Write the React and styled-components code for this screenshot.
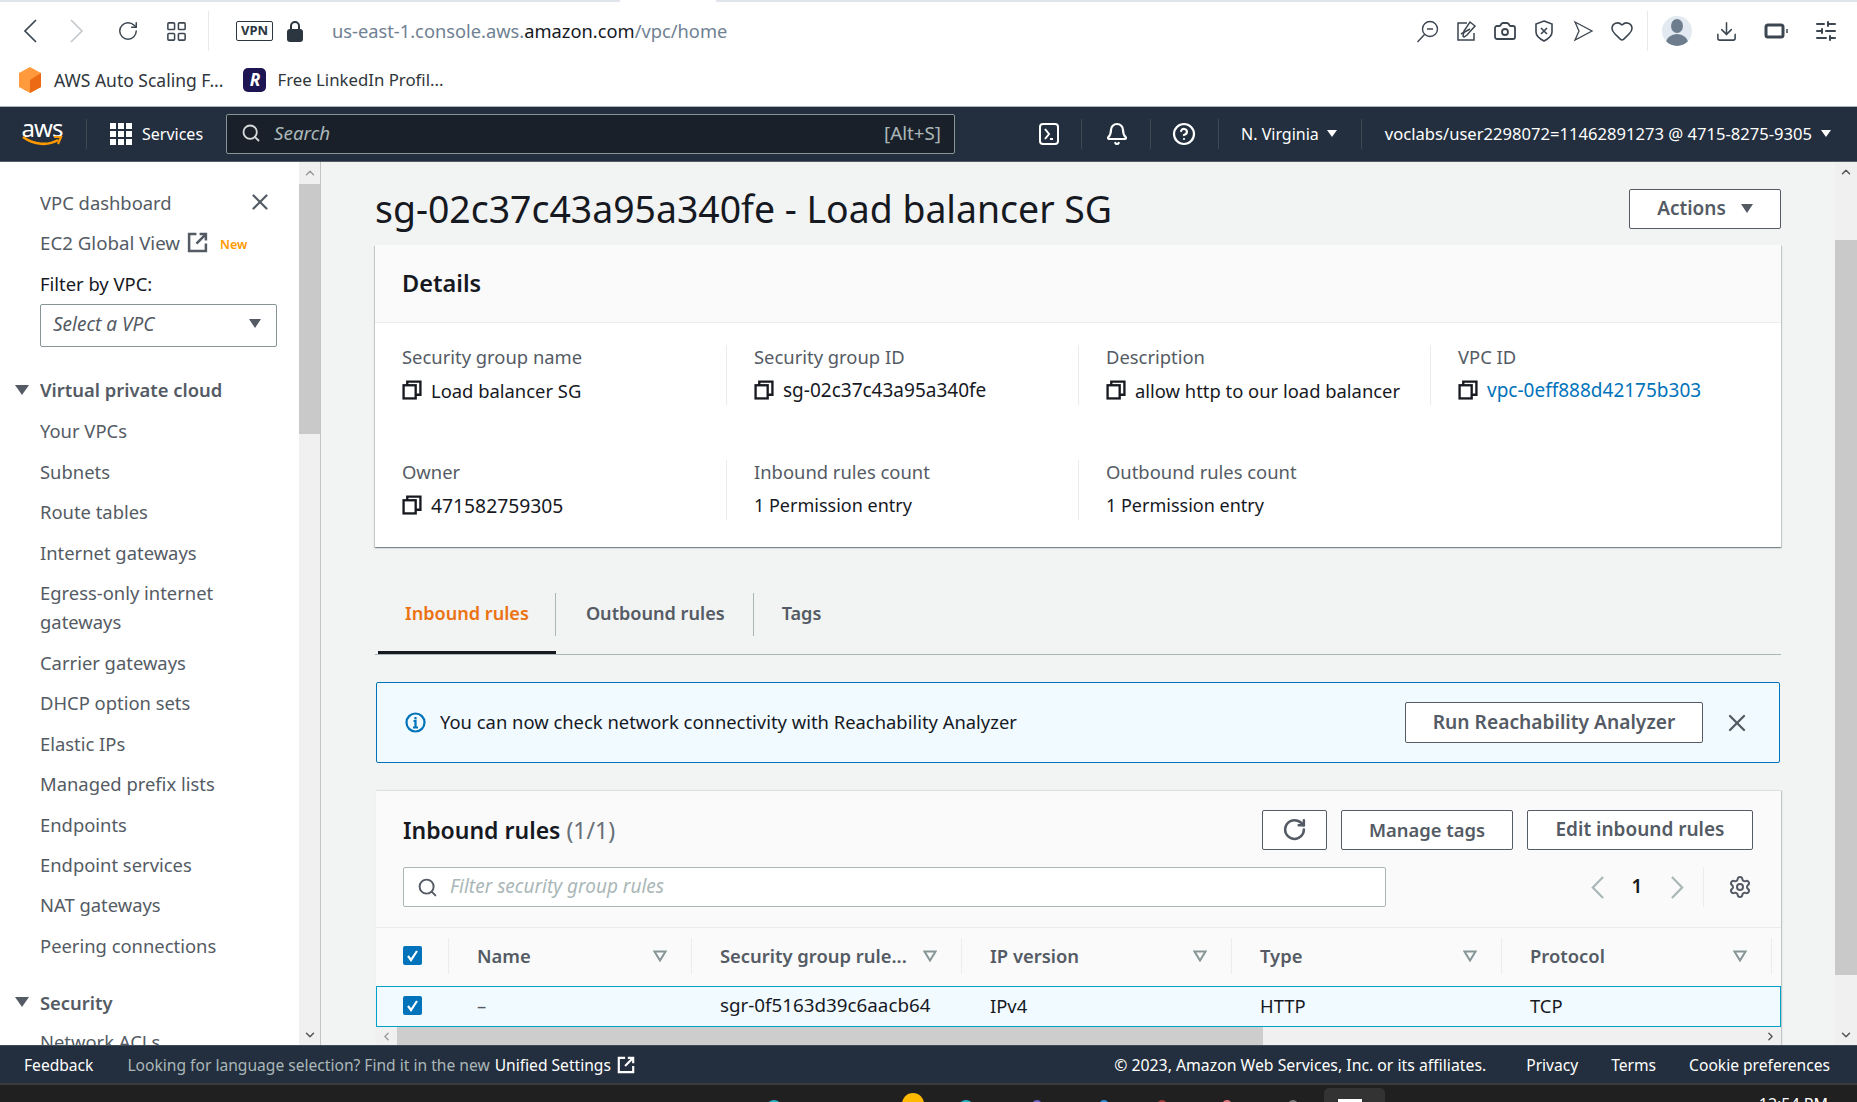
import React from "react";
import styled, { createGlobalStyle } from "styled-components";
import {
  Bell,
  Camera,
  ChevronDown,
  ChevronLeft,
  ChevronRight,
  ChevronUp,
  CircleHelp,
  Download,
  Heart,
  LayoutGrid,
  RotateCw,
  Search,
  Settings,
  SlidersHorizontal,
  X,
} from "lucide-react";

const GlobalStyle = createGlobalStyle`
  html, body { margin: 0; padding: 0; height: 100%; overflow: hidden; }
  body { font-family: "Noto Sans", "Open Sans", sans-serif; background: #fff; color: #16191f; }
  * { box-sizing: border-box; }
`;

const Page = styled.div`
  width: 1857px;
  height: 1102px;
  display: flex;
  flex-direction: column;
  overflow: hidden;
`;

/* browser chrome */
const TabStrip = styled.div`
  height: 2px;
  flex: none;
  background: linear-gradient(to right, #dfe5ea 620px, #fff 620px, #fff 716px, #dfe5ea 716px);
`;
const BrowserBar = styled.div`
  height: 58px;
  flex: none;
  display: flex;
  align-items: center;
  padding: 0 0 0 18px;
  color: #3c4650;
`;
const BarIcon = styled.span`
  display: inline-flex;
  align-items: center;
  justify-content: center;
  flex: none;
  width: ${(p) => p.$w || 24}px;
  margin-left: ${(p) => p.$ml || 0}px;
  margin-right: ${(p) => p.$mr || 0}px;
  color: ${(p) => p.$color || "inherit"};
`;
const BarSep = styled.span`
  width: 1px;
  height: 40px;
  flex: none;
  background: #e7eaed;
  margin-left: ${(p) => p.$ml}px;
`;
const VpnTag = styled.span`
  flex: none;
  width: 37px;
  height: 20px;
  margin-left: 27px;
  border: 1.5px solid #2c3640;
  border-radius: 2px;
  font-size: 13px;
  font-weight: 700;
  line-height: 17px;
  text-align: center;
  color: #2c3640;
`;
const Url = styled.div`
  margin-left: 25px;
  padding-bottom: 2px;
  font-size: 18.3px;
  color: #6f8193;
  & b { font-weight: 400; color: #16191f; }
`;
const Spacer = styled.div`
  flex: 1;
`;
const Avatar = styled.span`
  position: relative;
  flex: none;
  width: 30px;
  height: 30px;
  margin-left: 14px;
  border-radius: 50%;
  background: #e2e9f0;
  overflow: hidden;
  &::before {
    content: "";
    position: absolute;
    left: 9px;
    top: 3px;
    width: 12px;
    height: 14px;
    border-radius: 50%;
    background: #6d7d8e;
  }
  &::after {
    content: "";
    position: absolute;
    left: 4px;
    top: 18px;
    width: 22px;
    height: 18px;
    border-radius: 50%;
    background: #6d7d8e;
  }
`;
const Bookmarks = styled.div`
  height: 46px;
  flex: none;
  display: flex;
  align-items: center;
  padding: 0 0 7px 18px;
  font-size: 17.5px;
  color: #30363c;
`;
const BookmarkText = styled.span`
  margin-left: ${(p) => p.$ml}px;
  font-size: ${(p) => p.$fs || 17.5}px;
  white-space: nowrap;
`;
const RBadge = styled.span`
  flex: none;
  width: 23px;
  height: 24px;
  margin-left: 20px;
  border-radius: 5px;
  background: #1d1652;
  color: #fff;
  font-size: 17px;
  font-weight: 700;
  font-style: italic;
  line-height: 24px;
  text-align: center;
`;

/* aws console nav */
const Nav = styled.div`
  height: 56px;
  flex: none;
  display: flex;
  align-items: center;
  padding-bottom: 1px;
  background: #232f3e;
  border-top: 1px solid #aab7b8;
  border-bottom: 1px solid #545b64;
  color: #fff;
  font-size: 16px;
`;
const AwsLogo = styled.div`
  width: 42px;
  flex: none;
  margin-left: 21px;
  display: flex;
  flex-direction: column;
  align-items: center;
  font-size: 24px;
  line-height: 20px;
  letter-spacing: -1px;
  height: 32px;
  & svg { margin-top: -3px; }
`;
const NavSep = styled.span`
  width: 1px;
  height: 30px;
  flex: none;
  background: #414750;
  margin-left: ${(p) => p.$ml}px;
`;
const NavText = styled.span`
  margin-left: ${(p) => p.$ml || 0}px;
  font-size: ${(p) => p.$fs || 16}px;
  white-space: nowrap;
`;
const SearchBox = styled.div`
  width: 729px;
  height: 40px;
  flex: none;
  margin-left: 23px;
  display: flex;
  align-items: center;
  padding: 0 13px 1px 14px;
  background: #1a202a;
  border: 1px solid #879596;
  border-radius: 2px;
  color: #aab7b8;
  font-size: 18.8px;
`;
const SearchText = styled.span`
  margin-left: 13px;
  flex: 1;
  font-style: italic;
`;
const Caret = styled.span`
  display: inline-block;
  flex: none;
  width: 0;
  height: 0;
  margin-left: ${(p) => p.$ml || 0}px;
  border-left: ${(p) => p.$size || 5}px solid transparent;
  border-right: ${(p) => p.$size || 5}px solid transparent;
  border-top: ${(p) => (p.$size || 5) * 1.5}px solid ${(p) => p.$color || "currentColor"};
`;

/* body */
const Workspace = styled.div`
  height: 883px;
  flex: none;
  display: flex;
`;
const Sidebar = styled.aside`
  width: 299px;
  flex: none;
  padding: 20px 0 0 0;
  overflow: hidden;
  background: #fff;
  color: #545b64;
  font-size: 18.4px;
`;
const SideRow = styled.div`
  height: ${(p) => p.$h || 40.4}px;
  display: flex;
  align-items: center;
  padding-left: 40px;
  white-space: nowrap;
  font-size: ${(p) => p.$fs || 18.4}px;
  color: ${(p) => p.$color || "inherit"};
`;
const SideClose = styled.span`
  margin-left: auto;
  margin-right: 26px;
  display: inline-flex;
`;
const ExtWrap = styled.span`
  margin-left: ${(p) => p.$ml}px;
  display: inline-flex;
`;
const NewTag = styled.span`
  margin: 4px 0 0 12px;
  font-size: 12.5px;
  font-weight: 600;
  color: #ff9900;
`;
const Select = styled.div`
  width: 237px;
  height: 43px;
  margin: 0 0 25px 40px;
  display: flex;
  align-items: center;
  justify-content: space-between;
  padding: 0 15px 3px 12px;
  border: 1px solid #879596;
  border-radius: 2px;
  font-size: 19px;
  font-style: italic;
`;
const SideHeading = styled.div`
  height: ${(p) => p.$h || 40}px;
  margin-top: ${(p) => p.$mt || 0}px;
  margin-bottom: ${(p) => p.$mb || 0}px;
  display: flex;
  align-items: center;
  padding-left: 15px;
  font-weight: 600;
  & > span:last-child { margin-left: 11px; }
`;
const Wrapped = styled.div`
  height: 70px;
  padding: 6px 0 0 40px;
  line-height: 29px;
`;
const Scrollbar = styled.div`
  width: 22px;
  flex: none;
  display: flex;
  flex-direction: column;
  background: #f0f0f0;
  color: #9a9a9a;
  border-right: ${(p) => (p.$edge ? "1px solid #c4c4c4" : "none")};
`;
const ScrollBtn = styled.div`
  height: ${(p) => p.$h}px;
  flex: none;
  display: flex;
  align-items: ${(p) => p.$align || "center"};
  justify-content: center;
  padding: 3px 0;
`;
const ScrollThumb = styled.div`
  height: ${(p) => p.$h}px;
  flex: none;
  background: #c9c9c9;
`;
const ScrollFill = styled.div`
  flex: 1;
`;
const Content = styled.main`
  flex: 1;
  min-width: 0;
  height: 100%;
  padding: 0 0 0 54px;
  display: flex;
  flex-direction: column;
  overflow: hidden;
  background: #f2f3f3;
`;
const ContentInner = styled.div`
  width: 1406px;
  display: flex;
  flex-direction: column;
  height: 100%;
`;
const TitleRow = styled.div`
  height: 83px;
  flex: none;
  padding-top: 27px;
  display: flex;
  justify-content: space-between;
  align-items: flex-start;
`;
const Title = styled.h1`
  margin: 0;
  font-size: 37.4px;
  line-height: 40px;
  font-weight: 400;
  white-space: nowrap;
`;
const Button = styled.button`
  height: ${(p) => p.$h || 40}px;
  width: ${(p) => p.$w}px;
  margin-left: ${(p) => p.$ml || 0}px;
  flex: none;
  display: inline-flex;
  align-items: center;
  justify-content: center;
  gap: ${(p) => p.$gap || 0}px;
  padding: 0 0 2px;
  background: #fff;
  border: 1px solid #545b64;
  border-radius: 2px;
  color: #545b64;
  font-family: inherit;
  font-size: ${(p) => p.$fs || 19}px;
  font-weight: 600;
`;
const DetailsCard = styled.section`
  flex: none;
  height: 302px;
  background: #fff;
  box-shadow: 0 1px 1px 0 rgba(0, 28, 36, 0.3), 1px 1px 1px 0 rgba(0, 28, 36, 0.15), -1px 1px 1px 0 rgba(0, 28, 36, 0.15);
`;
const CardHead = styled.div`
  height: 78px;
  display: flex;
  align-items: center;
  padding: 0 0 2px 27px;
  background: #fafafa;
  border-bottom: 1px solid #eaeded;
  font-size: 23.5px;
  font-weight: 600;
`;
const DetailGrid = styled.div`
  display: grid;
  grid-template-columns: repeat(4, 352px);
  grid-auto-rows: 60px;
  row-gap: 55px;
  padding-top: 22px;
`;
const Detail = styled.div`
  padding-left: 27px;
  border-right: ${(p) => (p.$last ? "none" : "1px solid #eaeded")};
  font-size: 18.4px;
  white-space: nowrap;
`;
const DetailLabel = styled.div`
  height: 26px;
  line-height: 24px;
  color: #545b64;
`;
const DetailValue = styled.div`
  margin-top: 5px;
  height: 28px;
  display: flex;
  align-items: center;
  gap: 9px;
  font-size: ${(p) => p.$fs || 18.4}px;
  color: #16191f;
  & a { color: #0073bb; text-decoration: none; }
`;
const TabBar = styled.div`
  flex: none;
  height: 65px;
  margin-top: 43px;
  padding-left: 3px;
  display: flex;
  border-bottom: 1px solid #aab7b8;
`;
const Tab = styled.div`
  height: 64px;
  border-bottom: ${(p) => (p.$active ? "3px solid #16191f" : "none")};
`;
const TabLabel = styled.div`
  height: 43px;
  margin-top: 3px;
  display: flex;
  align-items: center;
  padding: 0 ${(p) => p.$pr}px 3px ${(p) => p.$pl}px;
  border-right: ${(p) => (p.$last ? "none" : "1px solid #aab7b8")};
  font-size: 18.1px;
  font-weight: 600;
  white-space: nowrap;
  color: ${(p) => (p.$active ? "#ec7211" : "#545b64")};
`;
const Alert = styled.div`
  flex: none;
  height: 81px;
  margin: 27px 1px 0 1px;
  display: flex;
  align-items: center;
  padding: 0 28px 0 28px;
  background: #f1faff;
  border: 1px solid #0073bb;
  border-radius: 2px;
  font-size: 18.4px;
`;
const AlertText = styled.span`
  margin-left: 14px;
  padding-bottom: 3px;
  flex: 1;
`;
const AlertClose = styled.span`
  display: inline-flex;
  margin-left: 20px;
  color: #545b64;
`;
const TableCard = styled.section`
  flex: 1;
  min-height: 0;
  margin: 28px 0 0 1px;
  display: flex;
  flex-direction: column;
  background: #fafafa;
  box-shadow: 1px 0 1px 0 rgba(0, 28, 36, 0.2), 0 -1px 1px 0 rgba(0, 28, 36, 0.05);
`;
const TableTools = styled.div`
  height: 137px;
  flex: none;
  padding: 19px 28px 0 27px;
  border-bottom: 1px solid #eaeded;
`;
const ToolRow = styled.div`
  display: flex;
  align-items: center;
  height: ${(p) => p.$h}px;
  margin-top: ${(p) => p.$mt || 0}px;
`;
const TableTitle = styled.h2`
  margin: 0;
  flex: 1;
  font-size: 23px;
  font-weight: 600;
  & span { font-weight: 400; color: #687078; }
`;
const FilterBox = styled.div`
  width: 983px;
  height: 40px;
  flex: none;
  display: flex;
  align-items: center;
  padding-left: 13px;
  background: #fff;
  border: 1px solid #aab7b8;
  border-radius: 2px;
  color: #545b64;
`;
const FilterText = styled.span`
  margin-left: 12px;
  padding-bottom: 2px;
  font-size: 19px;
  font-style: italic;
  color: #aab7b8;
`;
const Pager = styled.div`
  margin-left: auto;
  width: 170px;
  height: 40px;
  display: flex;
  align-items: center;
  color: #aab7b8;
`;
const PagerArrow = styled.span`
  width: 28px;
  display: inline-flex;
  justify-content: center;
`;
const PagerNumber = styled.b`
  width: 52px;
  padding-bottom: 2px;
  text-align: center;
  font-size: 19px;
  font-weight: 600;
  color: #16191f;
`;
const PagerSep = styled.span`
  width: 1px;
  height: 40px;
  margin-left: 12px;
  background: #eaeded;
`;
const GearWrap = styled.span`
  display: inline-flex;
  margin-left: 24px;
  color: #545b64;
`;
const GridRow = styled.div`
  flex: none;
  height: ${(p) => p.$h}px;
  display: grid;
  grid-template-columns: 73px 243px 270px 270px 270px 270px 10px;
  align-items: center;
  font-size: 18.4px;
  ${(p) => (p.$selected ? "background: #f1faff; border: 1.5px solid #00a1c9;" : "")}
`;
const HeadCell = styled.div`
  height: 36px;
  display: flex;
  align-items: center;
  justify-content: space-between;
  padding: 0 24px 0 ${(p) => p.$pl || 28}px;
  border-right: 1px solid #eaeded;
  font-weight: 600;
  color: #545b64;
  white-space: nowrap;
  margin-bottom: 3px;
`;
const BodyCell = styled.div`
  padding: 0 0 3px ${(p) => p.$pl || 27}px;
  display: flex;
  white-space: nowrap;
  font-size: ${(p) => p.$fs || 18.4}px;
  color: ${(p) => p.$color || "#16191f"};
`;
const Check = styled.span`
  display: inline-flex;
  align-items: center;
  justify-content: center;
  width: 19px;
  height: 19px;
  border-radius: 2px;
  background: #0073bb;
`;
const HScroll = styled.div`
  height: 18px;
  flex: none;
  display: flex;
  background: #f0f0f0;
  color: #9a9a9a;
`;
const HScrollBtn = styled.div`
  width: 21px;
  display: flex;
  align-items: center;
  justify-content: center;
`;
const HScrollThumb = styled.div`
  width: 866px;
  background: #cdcdcd;
`;

/* footer + taskbar */
const Footer = styled.footer`
  height: 40px;
  flex: none;
  display: flex;
  align-items: center;
  padding: 0 27px 0 24px;
  background: #232f3e;
  border-top: 1px solid #3f4a57;
  border-bottom: 2px solid #3c3c3c;
  color: #fff;
  font-size: 15.6px;
  white-space: nowrap;
`;
const FootMuted = styled.span`
  margin-left: 34px;
  color: #aab7b8;
`;
const FootLink = styled.span`
  margin-left: ${(p) => p.$ml || 0}px;
  font-size: ${(p) => p.$fs || 15.6}px;
`;
const Taskbar = styled.div`
  flex: 1;
  min-height: 0;
  display: flex;
  overflow: hidden;
  background: #202020;
`;
const Tray = styled.span`
  flex: none;
  margin-left: ${(p) => p.$ml}px;
  margin-top: ${(p) => p.$mt}px;
  width: ${(p) => p.$w}px;
  height: ${(p) => p.$h}px;
  border-radius: ${(p) => p.$r || "50%"};
  background: ${(p) => p.$bg};
`;
const TrayBox = styled.span`
  flex: none;
  margin-left: ${(p) => p.$ml}px;
  margin-top: 3px;
  width: 61px;
  height: 30px;
  padding: 11px 0 0 14px;
  border-radius: 5px;
  background: #333;
  &::after {
    content: "";
    display: block;
    width: 24px;
    height: 10px;
    background: #fff;
  }
`;
const Clock = styled.span`
  margin-left: auto;
  margin-right: 29px;
  margin-top: 10px;
  color: #fff;
  font-size: 16px;
  line-height: 18px;
`;

const CopyIcon = () => (
  <svg width="20" height="20" viewBox="0 0 19 19" fill="none" stroke="#16191f" strokeWidth="2.2">
    <path d="M5 5V1.5h12.5V14H13" />
    <rect x="1.5" y="5" width="11.5" height="12.5" />
  </svg>
);

const ExtIcon = ({ size = 21, color = "#545b64" }) => (
  <svg width={size} height={size} viewBox="0 0 20 20" fill="none" stroke={color} strokeWidth="2.4">
    <path d="M9 2H2v16h16v-7" />
    <path d="M12 2h6v6M18 2L9 11" />
  </svg>
);

const SortIcon = () => (
  <svg width="14" height="12" viewBox="0 0 14 12" fill="none" stroke="#879596" strokeWidth="2">
    <path d="M1.5 1.5h11L7 10.5z" />
  </svg>
);

const ThinChevron = ({ left, width = 14, height = 24, weight = 1.7 }) => (
  <svg width={width} height={height} viewBox="0 0 14 24" fill="none" stroke="currentColor" strokeWidth={weight} preserveAspectRatio="none">
    <path d={left ? "M13 1L2 12l11 11" : "M1 1l11 11L1 23"} />
  </svg>
);

const CheckBox = () => (
  <Check>
    <svg width="13" height="13" viewBox="0 0 13 13" fill="none" stroke="#fff" strokeWidth="2.2">
      <path d="M2 7l3 4 6-9" />
    </svg>
  </Check>
);

const sideItems = ["Your VPCs", "Subnets", "Route tables", "Internet gateways"];
const sideItems2 = [
  "Carrier gateways",
  "DHCP option sets",
  "Elastic IPs",
  "Managed prefix lists",
  "Endpoints",
  "Endpoint services",
  "NAT gateways",
  "Peering connections",
];

const details = [
  { label: "Security group name", value: "Load balancer SG", copy: true },
  { label: "Security group ID", value: "sg-02c37c43a95a340fe", copy: true, fs: 19 },
  { label: "Description", value: "allow http to our load balancer", copy: true },
  { label: "VPC ID", value: "vpc-0eff888d42175b303", copy: true, link: true, last: true, fs: 19 },
  { label: "Owner", value: "471582759305", copy: true, fs: 19.3 },
  { label: "Inbound rules count", value: "1 Permission entry", fs: 18 },
  { label: "Outbound rules count", value: "1 Permission entry", last: true, fs: 18 },
];

const columns = ["Name", "Security group rule...", "IP version", "Type", "Protocol"];

const trayBits = [
  { ml: 766, mt: 15, w: 16, h: 16, bg: "#2bb3c9" },
  { ml: 120, mt: 8, w: 22, h: 22, bg: "#ffb900" },
  { ml: 34, mt: 15, w: 16, h: 16, bg: "#2bb3c9" },
  { ml: 58, mt: 15, w: 10, h: 10, bg: "#6a5fc1" },
  { ml: 57, mt: 15, w: 10, h: 10, bg: "#2f8fd8" },
  { ml: 48, mt: 15, w: 10, h: 10, bg: "#a03a3a" },
  { ml: 55, mt: 15, w: 10, h: 10, bg: "#e0737a" },
  { ml: 56, mt: 15, w: 10, h: 10, bg: "#777" },
];

export default function App() {
  return (
    <Page>
      <GlobalStyle />
      <TabStrip />
      <BrowserBar>
        <BarIcon><ThinChevron left /></BarIcon>
        <BarIcon $ml={23} $color="#c4cace"><ThinChevron /></BarIcon>
        <BarIcon $ml={27}><RotateCw size={22} strokeWidth={1.6} /></BarIcon>
        <BarIcon $ml={24}><LayoutGrid size={23} strokeWidth={1.6} /></BarIcon>
        <BarSep $ml={20} />
        <VpnTag>VPN</VpnTag>
        <BarIcon $ml={10}>
          <svg width="16" height="21" viewBox="0 0 16 21" fill="none" stroke="#2c3640" strokeWidth="2">
            <path d="M4 9V5a4 4 0 0 1 8 0v4" />
            <rect x="1" y="9" width="14" height="11" rx="2" fill="#2c3640" />
          </svg>
        </BarIcon>
        <Url>us-east-1.console.aws.<b>amazon.com</b>/vpc/home</Url>
        <Spacer />
        <BarIcon>
          <svg width="23" height="23" viewBox="0 0 23 23" fill="none" stroke="currentColor" strokeWidth="1.4">
            <circle cx="14" cy="9" r="7.5" />
            <path d="M8.5 14.5L1.5 22M11 9h6" />
          </svg>
        </BarIcon>
        <BarIcon $ml={15}>
          <svg width="22" height="22" viewBox="0 0 22 22" fill="none" stroke="currentColor" strokeWidth="1.5">
            <path d="M12 3H3v17h16v-7" />
            <path d="M15 2l5 4-8 9-3 2-1-1 1-5z" />
            <path d="M6 14l9-5" />
          </svg>
        </BarIcon>
        <BarIcon $ml={15}><Camera size={24} strokeWidth={1.8} /></BarIcon>
        <BarIcon $ml={15}>
          <svg width="22" height="24" viewBox="0 0 22 24" fill="none" stroke="currentColor" strokeWidth="1.6">
            <path d="M11 2l8 3v8c0 4-4 7-8 9-4-2-8-5-8-9V5z" />
            <path d="M8 9l6 6M14 9l-6 6" />
          </svg>
        </BarIcon>
        <BarIcon $ml={15}>
          <svg width="22" height="22" viewBox="0 0 22 22" fill="none" stroke="currentColor" strokeWidth="1.3">
            <path d="M3 2l17 9-17 9 4-9z" />
          </svg>
        </BarIcon>
        <BarIcon $ml={15}><Heart size={24} strokeWidth={1.6} /></BarIcon>
        <BarSep $ml={13} />
        <Avatar />
        <BarIcon $ml={22}><Download size={23} strokeWidth={1.6} /></BarIcon>
        <BarIcon $ml={26}>
          <svg width="24" height="18" viewBox="0 0 24 18" fill="none" stroke="currentColor" strokeWidth="3">
            <rect x="2" y="3" width="17" height="12" rx="2" />
            <path d="M23 7v4" strokeWidth="1.5" />
          </svg>
        </BarIcon>
        <BarIcon $ml={26} $mr={19}>
          <SlidersHorizontal size={24} strokeWidth={2} />
        </BarIcon>
      </BrowserBar>
      <Bookmarks>
        <svg width="24" height="28" viewBox="0 0 24 28">
          <path d="M12 1l11 6v14l-11 6-11-6V7z" fill="#ff9a3c" />
          <path d="M12 14l11-7v14l-11 6z" fill="#ec6a14" />
        </svg>
        <BookmarkText $ml={12}>AWS Auto Scaling F...</BookmarkText>
        <RBadge>R</RBadge>
        <BookmarkText $ml={11} $fs={16.8}>Free LinkedIn Profil...</BookmarkText>
      </Bookmarks>
      <Nav>
        <AwsLogo>
          <span>aws</span>
          <svg width="42" height="13" viewBox="0 0 42 13" fill="none">
            <path d="M2 2c11 8 25 9 35 3" stroke="#ff9900" strokeWidth="2.6" />
            <path d="M33 2l7-0-3 7" stroke="#ff9900" strokeWidth="2.2" />
          </svg>
        </AwsLogo>
        <NavSep $ml={23} />
        <BarIcon $ml={23} $w={22}>
          <svg width="22" height="22" viewBox="0 0 22 22" fill="#fff">
            {[0, 8, 16].map((y) =>
              [0, 8, 16].map((x) => <rect key={`${x}-${y}`} x={x} y={y} width="6" height="6" />)
            )}
          </svg>
        </BarIcon>
        <NavText $ml={10}>Services</NavText>
        <SearchBox>
          <Search size={20} color="#d5dbdb" strokeWidth={2.2} />
          <SearchText>Search</SearchText>
          <span>[Alt+S]</span>
        </SearchBox>
        <BarIcon $ml={83} $w={22}>
          <svg width="22" height="24" viewBox="0 0 22 24" fill="none" stroke="#fff" strokeWidth="2">
            <rect x="2" y="2" width="18" height="20" rx="3" />
            <path d="M7 7l4 5-4 5M12 17h3" />
          </svg>
        </BarIcon>
        <NavSep $ml={21} />
        <BarIcon $ml={23} $w={24}><Bell size={24} strokeWidth={2.2} /></BarIcon>
        <NavSep $ml={21} />
        <BarIcon $ml={21} $w={24}><CircleHelp size={24} strokeWidth={2.2} /></BarIcon>
        <NavSep $ml={22} />
        <NavText $ml={22}>N. Virginia</NavText>
        <Caret $ml={8} />
        <NavSep $ml={24} />
        <NavText $ml={23} $fs={16.6}>voclabs/user2298072=11462891273 @ 4715-8275-9305</NavText>
        <Caret $ml={9} />
      </Nav>
      <Workspace>
        <Sidebar>
          <SideRow>
            VPC dashboard
            <SideClose><X size={26} strokeWidth={2} /></SideClose>
          </SideRow>
          <SideRow $fs={18.7}>
            EC2 Global View
            <ExtWrap $ml={7}><ExtIcon /></ExtWrap>
            <NewTag>New</NewTag>
          </SideRow>
          <SideRow $color="#16191f" $h={41}>Filter by VPC:</SideRow>
          <Select>
            Select a VPC
            <Caret $size={6.5} $color="#545b64" />
          </Select>
          <SideHeading $h={36} $mb={3}>
            <Caret $size={7} $color="#545b64" />
            <span>Virtual private cloud</span>
          </SideHeading>
          {sideItems.map((s) => <SideRow key={s}>{s}</SideRow>)}
          <Wrapped>Egress-only internet<br />gateways</Wrapped>
          {sideItems2.map((s) => <SideRow key={s}>{s}</SideRow>)}
          <SideHeading $mt={18} $h={38}>
            <Caret $size={7} $color="#545b64" />
            <span>Security</span>
          </SideHeading>
          <SideRow>Network ACLs</SideRow>
        </Sidebar>
        <Scrollbar $edge>
          <ScrollBtn $h={22}><ChevronUp size={14} strokeWidth={2.5} /></ScrollBtn>
          <ScrollThumb $h={250} />
          <ScrollFill />
          <ScrollBtn $h={20}><ChevronDown size={14} strokeWidth={2.5} color="#555" /></ScrollBtn>
        </Scrollbar>
        <Content>
          <ContentInner>
            <TitleRow>
              <Title>sg-02c37c43a95a340fe - Load balancer SG</Title>
              <Button $w={152} $gap={15}>
                Actions
                <Caret $size={6.5} />
              </Button>
            </TitleRow>
            <DetailsCard>
              <CardHead>Details</CardHead>
              <DetailGrid>
                {details.map((d) => (
                  <Detail key={d.label} $last={d.last}>
                    <DetailLabel>{d.label}</DetailLabel>
                    <DetailValue $fs={d.fs}>
                      {d.copy && <CopyIcon />}
                      {d.link ? <a href="#vpc">{d.value}</a> : <span>{d.value}</span>}
                    </DetailValue>
                  </Detail>
                ))}
              </DetailGrid>
            </DetailsCard>
            <TabBar>
              <Tab $active>
                <TabLabel $active $pl={27} $pr={26}>Inbound rules</TabLabel>
              </Tab>
              <Tab>
                <TabLabel $pl={30} $pr={28}>Outbound rules</TabLabel>
              </Tab>
              <Tab>
                <TabLabel $last $pl={28} $pr={28}>Tags</TabLabel>
              </Tab>
            </TabBar>
            <Alert>
              <svg width="21" height="21" viewBox="0 0 21 21" fill="none" stroke="#0073bb" strokeWidth="2.2">
                <circle cx="10.5" cy="10.5" r="9" />
                <path d="M8 15.5h5M10.5 15V9H8.5" />
                <path d="M10.5 5v2.4" />
              </svg>
              <AlertText>You can now check network connectivity with Reachability Analyzer</AlertText>
              <Button $w={298} $h={41} $fs={19.2}>Run Reachability Analyzer</Button>
              <AlertClose><X size={28} strokeWidth={2} /></AlertClose>
            </Alert>
            <TableCard>
              <TableTools>
                <ToolRow $h={40}>
                  <TableTitle>Inbound rules <span>(1/1)</span></TableTitle>
                  <Button $w={65}><RotateCw size={25} strokeWidth={2.4} /></Button>
                  <Button $w={172} $ml={14} $fs={18.4}>Manage tags</Button>
                  <Button $w={226} $ml={14}>Edit inbound rules</Button>
                </ToolRow>
                <ToolRow $h={40} $mt={17}>
                  <FilterBox>
                    <Search size={21} strokeWidth={2.2} />
                    <FilterText>Filter security group rules</FilterText>
                  </FilterBox>
                  <Pager>
                    <PagerArrow><ThinChevron left width={13} height={23} weight={2.4} /></PagerArrow>
                    <PagerNumber>1</PagerNumber>
                    <PagerArrow><ThinChevron width={13} height={23} weight={2.4} /></PagerArrow>
                    <PagerSep />
                    <GearWrap><Settings size={24} strokeWidth={2} /></GearWrap>
                  </Pager>
                </ToolRow>
              </TableTools>
              <GridRow $h={58}>
                <HeadCell $pl={27}><CheckBox /></HeadCell>
                {columns.map((c, i) => (
                  <HeadCell key={c} $pl={i === 0 ? 28 : 28}>
                    {c}
                    <SortIcon />
                  </HeadCell>
                ))}
              </GridRow>
              <GridRow $h={41} $selected>
                <BodyCell $pl={26}><CheckBox /></BodyCell>
                <BodyCell $color="#545b64">–</BodyCell>
                <BodyCell $fs={18.8}>sgr-0f5163d39c6aacb64</BodyCell>
                <BodyCell>IPv4</BodyCell>
                <BodyCell>HTTP</BodyCell>
                <BodyCell>TCP</BodyCell>
              </GridRow>
              <HScroll>
                <HScrollBtn><ChevronLeft size={13} strokeWidth={2.5} /></HScrollBtn>
                <HScrollThumb />
                <ScrollFill />
                <HScrollBtn><ChevronRight size={13} strokeWidth={2.5} color="#555" /></HScrollBtn>
              </HScroll>
            </TableCard>
          </ContentInner>
        </Content>
        <Scrollbar>
          <ScrollBtn $h={78} $align="flex-start"><ChevronUp size={14} strokeWidth={2.5} color="#555" /></ScrollBtn>
          <ScrollThumb $h={735} />
          <ScrollFill />
          <ScrollBtn $h={20}><ChevronDown size={14} strokeWidth={2.5} color="#555" /></ScrollBtn>
        </Scrollbar>
      </Workspace>
      <Footer>
        <span>Feedback</span>
        <FootMuted>Looking for language selection? Find it in the new</FootMuted>
        <FootLink $ml={5}>Unified Settings</FootLink>
        <ExtWrap $ml={6}><ExtIcon size={18} color="#fff" /></ExtWrap>
        <Spacer />
        <FootLink $fs={15.8}>© 2023, Amazon Web Services, Inc. or its affiliates.</FootLink>
        <FootLink $ml={40}>Privacy</FootLink>
        <FootLink $ml={33}>Terms</FootLink>
        <FootLink $ml={33}>Cookie preferences</FootLink>
      </Footer>
      <Taskbar>
        {trayBits.map((t) => (
          <Tray key={t.ml + t.bg} $ml={t.ml} $mt={t.mt} $w={t.w} $h={t.h} $bg={t.bg} />
        ))}
        <TrayBox $ml={26} />
        <Clock>12:54 PM</Clock>
      </Taskbar>
    </Page>
  );
}
